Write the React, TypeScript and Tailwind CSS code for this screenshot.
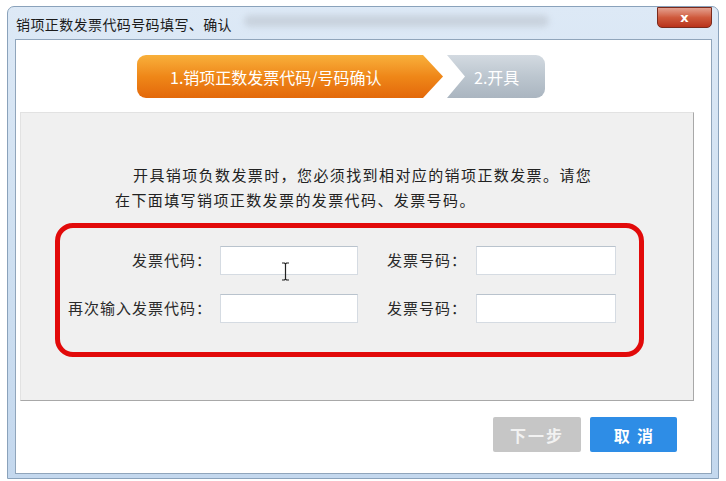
import React from 'react';

const font = { fontFamily: '"Noto Sans CJK SC", "Liberation Sans", sans-serif' };

const Field: React.FC<{ cursor?: boolean; w?: string }> = ({ cursor, w = 'w-[138px]' }) => (
  <div className={`relative h-[29px] ${w} bg-white border border-[#d5dbe2] border-t-[#b9c3cd]`}>
    {cursor && (
      <svg className="absolute left-[60px] top-[15px]" width="9" height="19" viewBox="0 0 9 19">
        <path d="M1 1h2.5l1 1 1-1H8M4.5 2v15M1 18h2.5l1-1 1 1H8" stroke="#222" strokeWidth="1.2" fill="none" />
      </svg>
    )}
  </div>
);

const Label: React.FC<{ text: string; w: string }> = ({ text, w }) => (
  <div className={`${w} text-right text-[15px] tracking-[1px] text-[#2a2a2a] whitespace-nowrap`}>{text}</div>
);

export default function App() {
  return (
    <div className="w-[726px] h-[481px] bg-white pt-[6px] pl-[7px]" style={font}>
      {/* window frame */}
      <div className="w-[712px] h-[473px] rounded-t-[7px] border border-[#8aa2bb] bg-gradient-to-b from-[#dde9f6] via-[#cfe0f1] to-[#c4d8ee] flex flex-col">
        {/* title bar */}
        <div className="h-[32px] flex items-start pl-[8px] pr-[6px]">
          <span className="mt-[7px] text-[14px] tracking-[0.4px] text-[#1b1b1b] whitespace-nowrap">销项正数发票代码号码填写、确认</span>
          <div className="mt-[8px] ml-[12px] w-[305px] h-[12px] rounded-full bg-[#bcc4ce] opacity-60 blur-[3px]" />
          <div className="flex-1" />
          <button className="w-[55px] h-[21px] rounded-b-[5px] border border-[#7a2a1c] bg-gradient-to-b from-[#e3a08f] via-[#cf5a3d] to-[#b8321a] flex items-center justify-center">
            <span className="text-white text-[13px] font-bold leading-none" style={{ fontFamily: '"DejaVu Sans", sans-serif' }}>x</span>
          </button>
        </div>

        {/* client area */}
        <div className="flex-1 ml-[7px] mr-[6px] mb-[4px] bg-white border border-[#90a5bb] flex flex-col">
          {/* steps */}
          <div className="flex items-center pl-[121px] pt-[15px]">
            <div className="w-[306px] h-[43px] rounded-l-[9px] bg-gradient-to-b from-[#f8b03a] via-[#ef8718] to-[#e3680a] [clip-path:polygon(0_0,calc(100%-20px)_0,100%_50%,calc(100%-20px)_100%,0_100%)] flex items-center pl-[33px]">
              <span className="text-white text-[16px]">1.销项正数发票代码/号码确认</span>
            </div>
            <div className="ml-[4px] w-[98px] h-[43px] rounded-r-[9px] bg-gradient-to-b from-[#d3dae1] via-[#bcc6cf] to-[#aab5c0] [clip-path:polygon(0_0,100%_0,100%_100%,0_100%,18px_50%)] flex items-center pl-[27px]">
              <span className="text-white text-[16px]">2.开具</span>
            </div>
          </div>

          {/* gray panel */}
          <div className="ml-[4px] mr-[17px] mt-[14px] h-[289px] bg-[#f0f0f0] border border-[#e2e2e2] border-r-[#a8a8a8] border-b-[#a8a8a8] flex flex-col">
            <div className="pl-[94px] pt-[49px] text-[15px] tracking-[1.4px] leading-[25px] text-[#222]">
              <div className="pl-[18px]">开具销项负数发票时，您必须找到相对应的销项正数发票。请您</div>
              <div>在下面填写销项正数发票的发票代码、发票号码。</div>
            </div>

            {/* red highlighted box */}
            <div className="ml-[34px] mt-[11px] w-[589px] h-[134px] rounded-[18px] border-[5px] border-[#e20a0a] flex flex-col gap-[19px] pt-[18px]">
              <div className="flex items-center">
                <Label text="发票代码：" w="w-[152px]" />
                <div className="ml-[8px]"><Field cursor /></div>
                <Label text="发票号码：" w="w-[109px]" />
                <div className="ml-[9px]"><Field w="w-[140px]" /></div>
              </div>
              <div className="flex items-center">
                <Label text="再次输入发票代码：" w="w-[152px]" />
                <div className="ml-[8px]"><Field /></div>
                <Label text="发票号码：" w="w-[109px]" />
                <div className="ml-[9px]"><Field w="w-[140px]" /></div>
              </div>
            </div>
          </div>

          {/* buttons */}
          <div className="flex justify-end gap-[9px] pr-[34px] mt-[16px]">
            <button className="w-[88px] h-[35px] bg-[#c6c6c6] text-[#f2f2f2] text-[16px] font-bold tracking-[2px] rounded-[2px]">下一步</button>
            <button className="w-[87px] h-[35px] bg-[#2e8de6] text-white text-[16px] font-bold rounded-[2px]">取&nbsp;&nbsp;消</button>
          </div>
        </div>
      </div>
    </div>
  );
}
